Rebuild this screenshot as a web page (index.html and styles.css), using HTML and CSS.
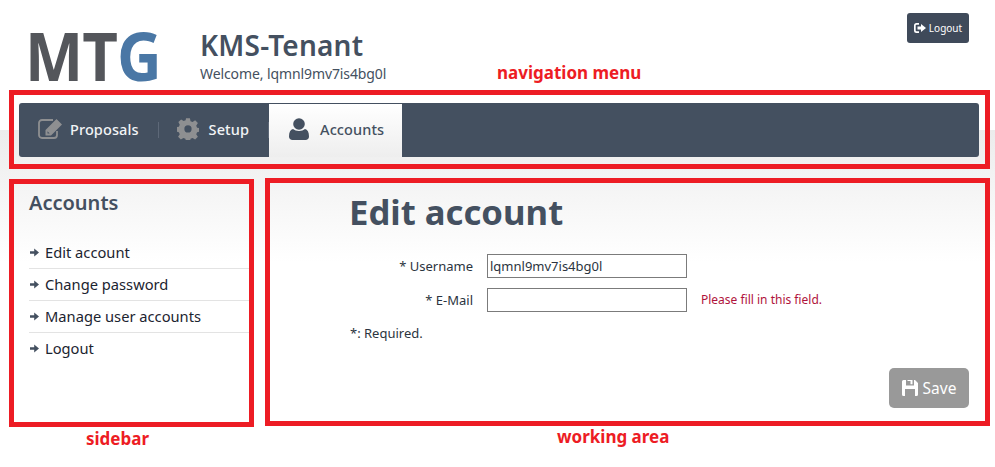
FILE: index.html
```html
<!DOCTYPE html>
<html lang="en">
<head>
<meta charset="utf-8">
<title>KMS-Tenant</title>
<link rel="stylesheet" href="styles.css">
</head>
<body>
<header class="top">
  <div class="logo"><span class="logo-dark">MT</span><span class="logo-blue">G</span></div>
  <div class="brand">
    <div class="brand-name">KMS-Tenant</div>
    <div class="welcome">Welcome, lqmnl9mv7is4bg0l</div>
  </div>
  <a class="logout-btn">
    <svg class="logout-icon" viewBox="0 0 12 10"><path d="M5 0H2.5A2.5 2.5 0 0 0 0 2.5v5A2.5 2.5 0 0 0 2.5 10H5V8.300H2.500a.8.8 0 0 1-.8-.8v-5a.8.8 0 0 1 .8-.8H5z"/><path d="M3.500 3.500H7V1l5 4-5 4V6.500H3.500z"/></svg>
    Logout
  </a>
</header>
<nav class="nav">
  <a class="tab">
    <svg class="tab-icon edit" viewBox="0 0 25 22"><path d="M19 13v4a3 3 0 0 1-3 3H4a3 3 0 0 1-3-3V5a3 3 0 0 1 3-3h11" fill="none" stroke="currentColor" stroke-width="1.800"/><path d="M7.500 12 18.500 1 24 6.500 13 17.500H7.500z M9.500 13.200v2.300h2.300l-.1-.1z"/></svg>
    Proposals
  </a>
  <span class="tab-sep"></span>
  <a class="tab setup">
    <svg class="tab-icon cog" viewBox="0 0 22 22"><path fill-rule="evenodd" d="M9 0h4l.6 3 2.100.9 2.600-1.700 2.800 2.800-1.700 2.600.9 2.100 3 .6v3.400l-3 .6-.9 2.100 1.700 2.600-2.800 2.800-2.600-1.700-2.100.9-.6 3H9l-.6-3-2.100-.9-2.600 1.700-2.800-2.800 1.700-2.600-.9-2.100-3-.6V9.300l3-.6.9-2.100L1.200 4 4 1.200l2.600 1.700 2-.9zM11 7.300a3.700 3.700 0 1 0 0 7.400 3.700 3.700 0 0 0 0-7.400z" transform="translate(.2 .2) scale(.98)"/></svg>
    Setup
  </a>
  <span class="tab-sep"></span>
  <a class="tab active">
    <svg class="tab-icon user" viewBox="0 0 20 22"><circle cx="10" cy="6" r="5.800"/><path d="M0 18.500c0-4.500 1.500-7 4-7.500 1.500 1.300 3.500 2 6 2s4.500-.7 6-2c2.500.5 4 3 4 7.500 0 2.300-1.500 3.500-3.500 3.500h-13C1.500 22 0 20.800 0 18.500z"/></svg>
    Accounts
  </a>
</nav>
<div class="content">
  <aside class="sidebar">
    <h2 class="side-title">Accounts</h2>
    <ul class="side-menu">
      <li class="side-item"><svg class="arrow" viewBox="0 0 9 9"><path d="M0 3.200h4.200V.4L9 4.500 4.200 8.600V5.800H0z"/></svg>Edit account</li>
      <li class="side-item"><svg class="arrow" viewBox="0 0 9 9"><path d="M0 3.200h4.200V.4L9 4.500 4.200 8.600V5.800H0z"/></svg>Change password</li>
      <li class="side-item"><svg class="arrow" viewBox="0 0 9 9"><path d="M0 3.200h4.200V.4L9 4.500 4.200 8.600V5.800H0z"/></svg>Manage user accounts</li>
      <li class="side-item"><svg class="arrow" viewBox="0 0 9 9"><path d="M0 3.200h4.200V.4L9 4.500 4.200 8.600V5.800H0z"/></svg>Logout</li>
    </ul>
  </aside>
  <main class="main">
    <h1 class="page-title">Edit account</h1>
    <form class="form">
      <div class="row">
        <label class="label">* Username</label>
        <input class="input" type="text" value="lqmnl9mv7is4bg0l">
      </div>
      <div class="row">
        <label class="label">* E-Mail</label>
        <input class="input" type="text">
        <span class="error">Please fill in this field.</span>
      </div>
      <p class="required">*: Required.</p>
    </form>
    <div class="actions">
      <button class="save" type="button">
        <svg class="save-icon" viewBox="0 0 16 16"><path fill-rule="evenodd" d="M0 1.500A1.500 1.500 0 0 1 1.500 0H13l3 3v11.500a1.500 1.500 0 0 1-1.500 1.500h-13A1.500 1.500 0 0 1 0 14.500zM4 0v5.500h8V0h-1.500v4.300H8.500V1H5.500V0zM3 9v7h10V9z"/></svg>
        Save
      </button>
    </div>
  </main>
</div>
<div class="note note-nav"></div>
<div class="note note-side"></div>
<div class="note note-main"></div>
<span class="note-label label-nav">navigation menu</span>
<span class="note-label label-side">sidebar</span>
<span class="note-label label-main">working area</span>
</body>
</html>
```

FILE: styles.css
```css
* { box-sizing: border-box; }
html, body { height: 100%; }
body {
  margin: 0;
  position: relative;
  overflow: hidden;
  font-family: "Noto Sans", "Open Sans", sans-serif;
  color: #445060;
  background: linear-gradient(#fff 0, #fff 130px, #ececec 130px, #fff 262px, #fff 100%);
}
.top {
  height: 103px;
  padding: 0 26px 0 25px;
  display: flex;
  align-items: flex-start;
}
.logo {
  width: 175px;
  margin-top: 16px;
  font-family: "Open Sans", sans-serif;
  font-weight: 700;
  font-size: 66px;
  line-height: 78px;
  letter-spacing: -1px;
  transform: scaleX(.935);
  transform-origin: left center;
  white-space: nowrap;
}
.logo-dark { color: #54565b; }
.logo-blue { color: #4a77a5; }
.brand { margin-top: 27px; }
.brand-name {
  font-size: 28px;
  line-height: 36px;
  font-weight: 600;
  letter-spacing: .2px;
  color: #445060;
}
.welcome {
  font-size: 14px;
  line-height: 20px;
  margin-top: 1px;
  letter-spacing: -.1px;
  color: #445060;
}
.logout-btn {
  margin: 13px 0 0 auto;
  width: 62px;
  height: 30px;
  background: #3f4a5a;
  border-radius: 3px;
  color: #fff;
  font-size: 10px;
  display: flex;
  align-items: center;
  justify-content: center;
  gap: 3px;
}
.logout-icon { width: 12px; height: 10px; fill: #fff; }
.nav {
  margin: 0 16px 0 19px;
  height: 54px;
  background: #445060;
  border-radius: 3px;
  display: flex;
  align-items: flex-end;
}
.tab {
  display: flex;
  align-items: center;
  height: 53px;
  padding: 0 19px 3px;
  color: #f2f4f6;
  font-size: 14.500px;
  font-weight: 500;
  letter-spacing: .1px;
}
.tab-sep { width: 1px; height: 16px; background: #5d6878; align-self: center; }
.setup { padding-left: 18px; }
.tab-icon { fill: #8e8f91; color: #8e8f91; margin-right: 7px; }
.edit { width: 25px; height: 22px; }
.cog { width: 22px; height: 22px; margin-right: 10px; }
.active {
  background: linear-gradient(#fff, #eee);
  color: #445060;
  padding: 0 18px 3px 20px;
}
.user { width: 20px; height: 22px; fill: #445060; margin-right: 11px; }
.content {
  display: flex;
  padding: 32px 26px 0 29px;
}
.sidebar { width: 220px; margin: -1px 101px 0 0; }
.side-title {
  margin: 0;
  font-size: 20px;
  line-height: 30px;
  font-weight: 600;
  color: #445060;
}
.side-menu {
  list-style: none;
  margin: 19px 0 0;
  padding: 0;
}
.side-item {
  height: 32px;
  border-bottom: 1px solid #e3e3e3;
  display: flex;
  align-items: center;
  font-size: 14.700px;
  color: #1c2430;
  padding-bottom: 1px;
}
.side-item:last-child { border-bottom-color: transparent; }
.arrow { width: 9px; height: 9px; fill: #445060; margin: 0 6px 0 1px; flex: none; }
.main { flex: 1; margin-left: -1px; }
.page-title {
  margin: 0;
  font-size: 34.700px;
  line-height: 46px;
  font-weight: 700;
  color: #445060;
}
.form { margin-top: 19px; margin-left: 1px; }
.row {
  display: flex;
  align-items: center;
  height: 24px;
  margin-bottom: 10px;
}
.label {
  width: 123px;
  text-align: right;
  font-size: 13px;
  color: #2b3440;
  margin-right: 14px;
  padding-bottom: 1px;
}
.input {
  width: 200px;
  height: 24px;
  border: 1px solid #7b7b7b;
  background: #fff;
  padding: 0 2px;
  margin: 0;
  font-family: inherit;
  font-size: 13px;
  color: #2b3440;
  outline: 0;
}
.error {
  margin-left: 14px;
  padding-bottom: 1px;
  font-size: 12px;
  color: #b0123b;
}
.required {
  margin: 12px 0 0;
  font-size: 13px;
  line-height: 18px;
  color: #2b3440;
}
.actions {
  margin-top: 26px;
  display: flex;
  justify-content: flex-end;
}
.save {
  width: 80px;
  height: 40px;
  border: 0;
  border-radius: 5px;
  background: #999;
  color: #fff;
  font-family: inherit;
  font-size: 15.500px;
  display: flex;
  align-items: center;
  justify-content: center;
  gap: 5px;
  padding: 0;
}
.save-icon { width: 16px; height: 16px; fill: #fff; }
.note {
  position: absolute;
  border: 5px solid #ed1c24;
  pointer-events: none;
}
.note-nav { left: 9px; top: 90px; width: 981px; height: 79px; }
.note-side { left: 9px; top: 179px; width: 245px; height: 248px; }
.note-main { left: 265px; top: 178px; width: 725px; height: 248px; }
.note-label {
  position: absolute;
  font-family: "Noto Sans", sans-serif;
  font-weight: 700;
  font-size: 17px;
  line-height: 22px;
  color: #ed1c24;
}
.label-nav { left: 497px; top: 62px; }
.label-side { left: 86px; top: 428px; }
.label-main { left: 557px; top: 426px; }
```
